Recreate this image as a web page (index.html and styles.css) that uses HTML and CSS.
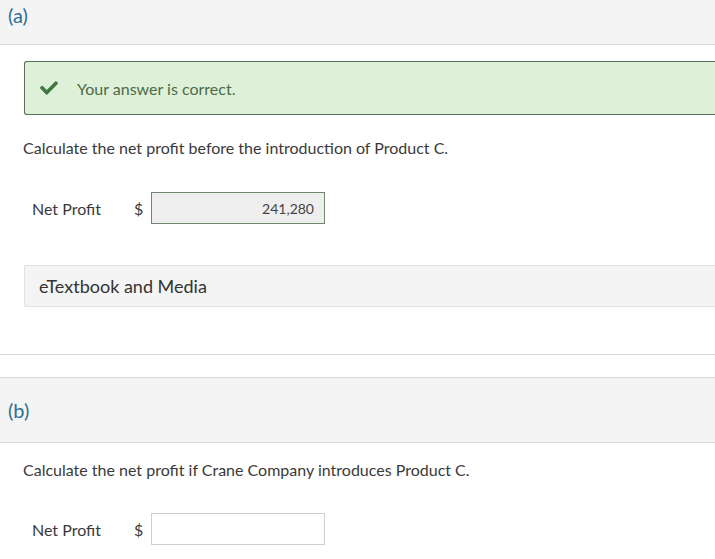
FILE: index.html
```html
<!DOCTYPE html>
<html>
<head>
<meta charset="utf-8">
<link rel="stylesheet" href="styles.css">
</head>
<body>
<section class="part part-a">
  <div class="part-head part-head-a"><span class="part-label">(a)</span></div>
  <div class="part-body">
    <div class="alert">
      <svg class="check" viewBox="0 0 512 512" aria-hidden="true"><path d="M173.898 439.404l-166.4-166.4c-9.997-9.997-9.997-26.206 0-36.204l36.203-36.204c9.997-9.998 26.207-9.998 36.204 0L192 312.69 432.095 72.596c9.997-9.997 26.207-9.997 36.204 0l36.203 36.204c9.997 9.997 9.997 26.206 0 36.204l-294.4 294.401c-9.998 9.997-26.207 9.997-36.204-.001z"/></svg>
      <span class="alert-text">Your answer is correct.</span>
    </div>
    <p class="question q-a">Calculate the net profit before the introduction of Product C.</p>
    <div class="answer-row">
      <span class="answer-label">Net Profit</span>
      <span class="currency">$</span>
      <input class="answer answer-done" type="text" value="241,280" readonly>
    </div>
    <div class="media">eTextbook and Media</div>
  </div>
</section>
<section class="part part-b">
  <div class="part-head part-head-b"><span class="part-label">(b)</span></div>
  <div class="part-body">
    <p class="question q-b">Calculate the net profit if Crane Company introduces Product C.</p>
    <div class="answer-row">
      <span class="answer-label">Net Profit</span>
      <span class="currency">$</span>
      <input class="answer answer-empty" type="text" value="">
    </div>
  </div>
</section>
</body>
</html>
```
FILE: styles.css
```css
html, body {
  margin: 0;
  padding: 0;
  background: #ffffff;
}
body {
  font-family: Lato, "Open Sans", "Liberation Sans", sans-serif;
  color: #3a3a3a;
  width: 715px;
  overflow: hidden;
}
.part-head {
  background: #f4f4f4;
  box-sizing: border-box;
  padding-left: 8px;
}
.part-head-a {
  height: 45px;
  border-bottom: 1px solid #dadada;
  padding-top: 3px;
}
.part-head-b {
  height: 66px;
  border-top: 1px solid #dadada;
  border-bottom: 1px solid #dadada;
  display: flex;
  align-items: center;
}
.part-label {
  font-size: 20px;
  line-height: 24px;
  color: #2c6f96;
}
.part-a {
  border-bottom: 1px solid #dadada;
  padding-bottom: 47px;
  margin-bottom: 22px;
}
.part-body {
  padding-left: 24px;
}
.alert {
  margin-top: 16px;
  height: 54px;
  box-sizing: border-box;
  background: #dff0d8;
  border: 1px solid #5b6f57;
  border-right: none;
  border-radius: 3px 0 0 3px;
  display: flex;
  align-items: center;
  padding-left: 15px;
}
.check {
  width: 18px;
  height: 18px;
  fill: #3e7a3f;
  margin-top: 0;
}
.alert-text {
  margin-left: 19px;
  font-size: 16px;
  color: #4b6a49;
  margin-top: 0;
}
.question {
  margin: 0;
  font-size: 16px;
  line-height: 20px;
  color: #3a3a3a;
  margin-left: -1px;
}
.q-a {
  margin-top: 23px;
}
.q-b {
  margin-top: 17px;
}
.answer-row {
  display: flex;
  align-items: center;
  padding-left: 8px;
  margin-top: 34px;
}
.q-b + .answer-row {
  margin-top: 33px;
}
.answer-label {
  width: 102px;
  font-size: 16px;
  color: #3a3a3a;
}
.currency {
  width: 17px;
  font-size: 16px;
  color: #3a3a3a;
}
.answer {
  box-sizing: border-box;
  width: 174px;
  height: 32px;
  margin: 0;
  font-family: Lato, "Open Sans", "Liberation Sans", sans-serif;
  font-size: 14px;
  text-align: right;
  padding: 0 10px;
  color: #444444;
  outline: none;
}
.answer-done {
  background: #eeeeee;
  border: 1px solid #6e8a6c;
}
.answer-empty {
  background: #ffffff;
  border: 1px solid #cfcfcf;
}
.media {
  margin-top: 41px;
  height: 42px;
  box-sizing: border-box;
  background: #f4f4f4;
  border: 1px solid #e2e2e2;
  border-right: none;
  border-radius: 2px 0 0 2px;
  display: flex;
  align-items: center;
  padding-left: 14px;
  font-size: 18px;
  color: #333333;
}
```
